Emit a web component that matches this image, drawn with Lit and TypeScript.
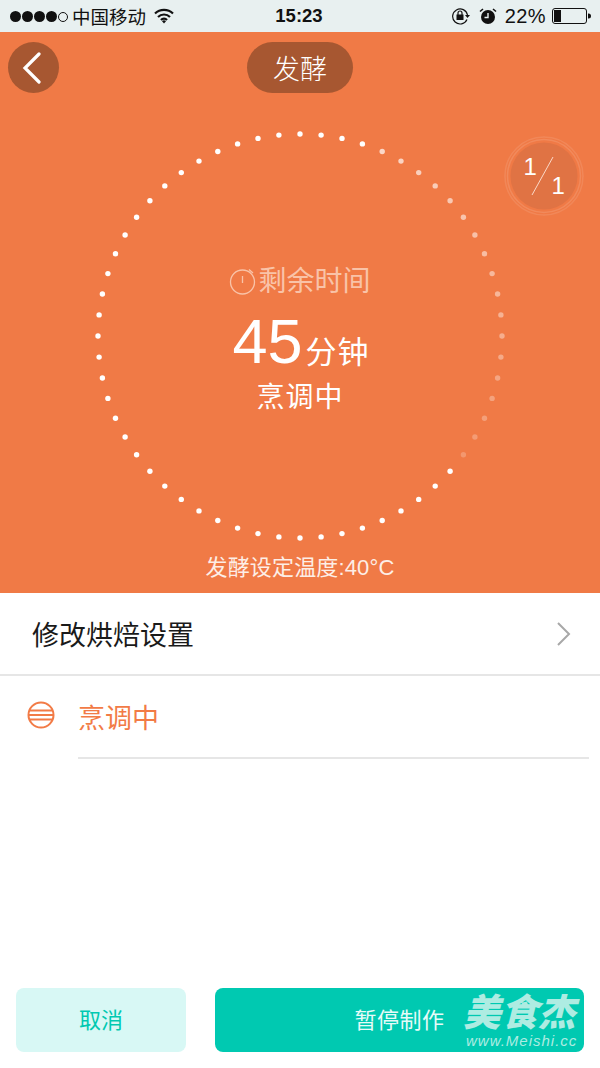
import { LitElement, html, css, svg } from "lit";
import { customElement } from "lit/decorators.js";

const DOTS = 60;
const CENTER = 210;
const RADIUS = 202;

// dots between these indexes (clockwise from 12 o'clock) are the unfinished part,
// they get fainter towards the end
const FADE_FROM = 4;
const FADE_TO = 21;

@customElement("app-root")
export class AppRoot extends LitElement {
  static styles = css`
    :host {
      display: block;
      width: 600px;
      height: 1068px;
      overflow: hidden;
      background: #fff;
      font-family: "Liberation Sans", "Noto Sans CJK SC", sans-serif;
    }

    .page {
      display: flex;
      flex-direction: column;
      height: 1068px;
    }

    .status {
      display: flex;
      align-items: center;
      justify-content: space-between;
      height: 32px;
      padding: 0 9px 0 10px;
      background: #e8f0f0;
      color: #111;
      font-size: 18px;
      position: relative;
    }

    .status-left,
    .status-right {
      display: flex;
      align-items: center;
    }

    .signal {
      display: flex;
      gap: 1px;
      margin-right: 4px;
    }

    .signal i {
      width: 11px;
      height: 11px;
      border-radius: 50%;
      background: #111;
      box-sizing: border-box;
    }

    .signal i.off {
      width: 10px;
      height: 10px;
      margin-top: 1px;
      background: none;
      border: 1px solid #111;
    }

    .carrier {
      margin-right: 8px;
      font-size: 18.5px;
    }

    .time {
      position: absolute;
      left: 0;
      right: 2px;
      text-align: center;
      font-weight: 700;
      font-size: 18.5px;
      pointer-events: none;
    }

    .alarm {
      margin-left: 8px;
    }

    .percent {
      margin: 0 6px 0 8px;
      font-size: 20px;
      letter-spacing: 0.4px;
    }

    .header {
      position: relative;
      display: flex;
      flex-direction: column;
      align-items: center;
      height: 561px;
      background: #f07a46;
      color: #fff;
    }

    .back {
      position: absolute;
      left: 8px;
      top: 10px;
      width: 51px;
      height: 51px;
      border-radius: 50%;
      background: #a75731;
      display: flex;
      align-items: center;
      justify-content: center;
      padding-right: 4px;
      box-sizing: border-box;
    }

    .title {
      margin-top: 10px;
      width: 106px;
      height: 51px;
      border-radius: 26px;
      background: #a75731;
      display: flex;
      align-items: center;
      justify-content: center;
      font-size: 27px;
      font-weight: 300;
    }

    .dial {
      position: relative;
      width: 420px;
      height: 420px;
      margin-top: 33px;
      display: grid;
      place-items: center;
    }

    .dial svg.ring {
      position: absolute;
      inset: 0;
    }

    .readout {
      display: flex;
      flex-direction: column;
      align-items: center;
      margin-top: 7px;
    }

    .remain {
      display: flex;
      align-items: center;
      gap: 2px;
      font-size: 28px;
      line-height: 36px;
      color: #f9c3a8;
    }

    .minutes {
      display: flex;
      align-items: baseline;
      margin-top: 5px;
      height: 72px;
      line-height: 72px;
    }

    .minutes b {
      font-size: 63px;
      font-weight: 400;
      margin-left: 2px;
    }

    .minutes span {
      font-size: 31px;
      margin-left: 3px;
      letter-spacing: 1px;
    }

    .state {
      margin-top: 3px;
      font-size: 28px;
      line-height: 36px;
      letter-spacing: 1px;
    }

    .setting {
      margin-top: 8px;
      font-size: 22px;
      line-height: 28px;
      letter-spacing: 0.15px;
      color: #fdeee6;
    }

    .badge {
      position: absolute;
      left: 504px;
      top: 104px;
      width: 80px;
      height: 80px;
    }

    .badge text {
      font-family: "Liberation Sans", sans-serif;
      font-size: 24px;
      fill: #fff;
    }

    .row {
      display: flex;
      align-items: center;
      justify-content: space-between;
      height: 81px;
      padding: 0 28px 0 32px;
      border-bottom: 2px solid #e6e6e6;
      font-size: 27px;
      color: #1a1a1a;
    }

    .step {
      display: flex;
      align-items: flex-start;
      padding-left: 27px;
    }

    .step svg {
      margin-top: 25px;
    }

    .step-body {
      flex: 1;
      margin: 0 11px 0 23px;
      height: 81px;
      border-bottom: 2px solid #e6e6e6;
      display: flex;
      align-items: center;
      font-size: 27px;
      color: #f27b46;
    }

    .actions {
      margin-top: auto;
      display: flex;
      justify-content: space-between;
      padding: 0 16px 16px;
    }

    .btn {
      height: 64px;
      box-sizing: border-box;
      padding-bottom: 5px;
      border-radius: 8px;
      display: flex;
      align-items: center;
      justify-content: center;
      font-size: 22px;
    }

    .cancel {
      width: 170px;
      background: #d8f8f5;
      color: #00c9b1;
    }

    .pause {
      position: relative;
      width: 369px;
      background: #00c9b1;
      color: #e6fbf8;
      letter-spacing: 0.5px;
    }

    .mark {
      position: absolute;
      left: 248px;
      top: 5px;
      width: 121px;
      color: #aeece2;
      font-style: italic;
    }

    .mark b {
      display: block;
      font-size: 37.5px;
      line-height: 40px;
      font-weight: 900;
      letter-spacing: 0;
    }

    .mark span {
      display: block;
      margin-left: 3px;
      font-size: 15px;
      line-height: 16px;
      letter-spacing: 1px;
      white-space: nowrap;
    }
  `;

  private renderDots() {
    return Array.from({ length: DOTS }, (_, i) => {
      const a = (i * 2 * Math.PI) / DOTS;
      const x = CENTER + RADIUS * Math.sin(a);
      const y = CENTER - RADIUS * Math.cos(a);
      const faded = i >= FADE_FROM && i <= FADE_TO;
      const opacity = faded ? 0.7 - (0.48 * (i - FADE_FROM)) / (FADE_TO - FADE_FROM) : 1;
      return svg`<circle cx=${x.toFixed(1)} cy=${y.toFixed(1)} r="2.7" fill="#fff" opacity=${opacity.toFixed(2)}></circle>`;
    });
  }

  render() {
    return html`
      <div class="page">
        <div class="status">
          <div class="status-left">
            <div class="signal"><i></i><i></i><i></i><i></i><i class="off"></i></div>
            <span class="carrier">中国移动</span>
            <svg width="20" height="16" viewBox="0 0 20 16">
              <path d="M1 5.500a13 13 0 0 1 18 0M4 9a8.500 8.500 0 0 1 12 0M7 12a4 4 0 0 1 6 0" fill="none" stroke="#111" stroke-width="2.200"></path>
              <path d="M10 15.500l-2-2.300a3 3 0 0 1 4 0z" fill="#111"></path>
            </svg>
          </div>
          <div class="time">15:23</div>
          <div class="status-right">
            <svg width="20" height="18" viewBox="0 0 20 18">
              <path d="M16 12.500A7.500 7.500 0 1 1 16.500 8" fill="none" stroke="#111" stroke-width="1.200"></path>
              <path d="M14 8h5l-2.500 3z" fill="#111"></path>
              <rect x="5.500" y="7.500" width="7" height="5.500" fill="#111"></rect>
              <path d="M7 8V6a2 2 0 0 1 4 0v2" fill="none" stroke="#111" stroke-width="1.200"></path>
            </svg>
            <svg class="alarm" width="18" height="18" viewBox="0 0 18 18">
              <circle cx="9" cy="10" r="7" fill="#111"></circle>
              <path d="M9 6v4.500H5.500" fill="none" stroke="#e8f0f0" stroke-width="1.400"></path>
              <path d="M1 4.500 4 2M17 4.500 14 2" stroke="#111" stroke-width="1.600"></path>
            </svg>
            <span class="percent">22%</span>
            <svg width="39" height="16" viewBox="0 0 39 16">
              <rect x="0.500" y="0.500" width="34" height="15" rx="2.500" fill="none" stroke="#111"></rect>
              <rect x="2" y="2" width="7" height="12" fill="#111"></rect>
              <path d="M36 5.500h.5a2 2 0 0 1 0 5H36z" fill="#111"></path>
            </svg>
          </div>
        </div>

        <div class="header">
          <div class="back">
            <svg width="20" height="32" viewBox="0 0 20 32">
              <path d="M17 2 3 16l14 14" fill="none" stroke="#fff" stroke-width="3.200" stroke-linecap="round"></path>
            </svg>
          </div>
          <div class="title">发酵</div>

          <div class="dial">
            <svg class="ring" width="420" height="420" viewBox="0 0 420 420">${this.renderDots()}</svg>
            <div class="readout">
              <div class="remain">
                <svg width="27" height="27" viewBox="0 0 27 27">
                  <circle cx="13.500" cy="14" r="12" fill="none" stroke="#f9c3a8" stroke-width="1.300"></circle>
                  <path d="M13.500 8v7M20 1.500l4 3.500" fill="none" stroke="#f9c3a8" stroke-width="1.300"></path>
                </svg>
                <span>剩余时间</span>
              </div>
              <div class="minutes"><b>45</b><span>分钟</span></div>
              <div class="state">烹调中</div>
            </div>
          </div>

          <div class="setting">发酵设定温度:40°C</div>

          <svg class="badge" viewBox="0 0 80 80">
            <circle cx="40" cy="40" r="39" fill="none" stroke="#fff" stroke-opacity="0.1" stroke-width="1.500"></circle>
            <circle cx="40" cy="40" r="36.500" fill="none" stroke="#fff" stroke-opacity="0.12" stroke-width="1.500"></circle>
            <circle cx="40" cy="40" r="33.500" fill="#e07344"></circle>
            <path d="M28 59 49 21" stroke="#fbd9c8" stroke-width="1"></path>
            <text x="19.500" y="39">1</text>
            <text x="47.500" y="58">1</text>
          </svg>
        </div>

        <div class="row">
          <span>修改烘焙设置</span>
          <svg width="16" height="26" viewBox="0 0 16 26">
            <path d="M2 2l11 11L2 24" fill="none" stroke="#a8a8a8" stroke-width="2"></path>
          </svg>
        </div>

        <div class="step">
          <svg width="28" height="28" viewBox="0 0 28 28">
            <circle cx="14" cy="14" r="12.500" fill="none" stroke="#f27b46" stroke-width="2"></circle>
            <path d="M2 9.500h24M1.500 14h25M2 18.500h24" stroke="#f27b46" stroke-width="1.800"></path>
          </svg>
          <div class="step-body">烹调中</div>
        </div>

        <div class="actions">
          <div class="btn cancel">取消</div>
          <div class="btn pause">
            暂停制作
            <div class="mark"><b>美食杰</b><span>www.Meishi.cc</span></div>
          </div>
        </div>
      </div>
    `;
  }
}

declare global {
  interface HTMLElementTagNameMap {
    "app-root": AppRoot;
  }
}
